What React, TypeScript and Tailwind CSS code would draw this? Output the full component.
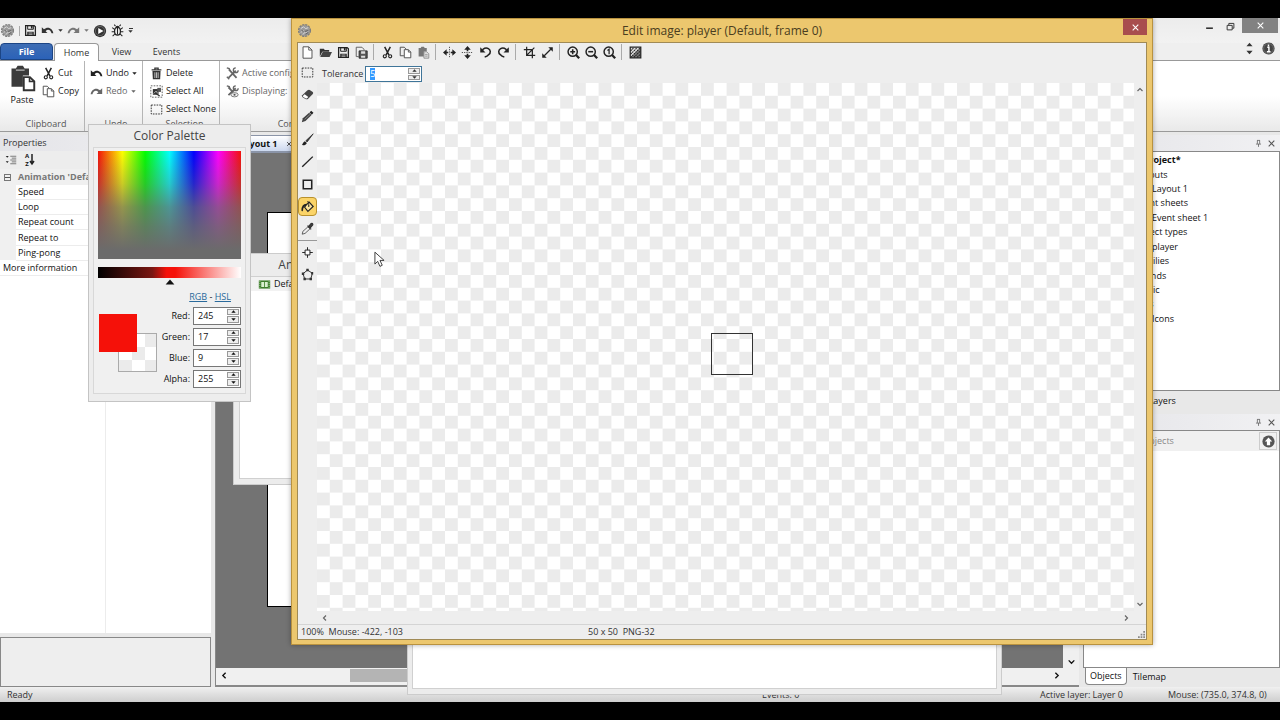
import React, { useEffect, useRef } from "react";

type IconProps = { name: string; className?: string };

const icons: Record<string, React.ReactNode> = {
  gear: (
    <>
      <circle cx="8" cy="8" r="6" fill="#9a9a9a" />
      <circle cx="8" cy="8" r="6.3" fill="none" stroke="#7d7d7d" strokeWidth="1.4" strokeDasharray="2.4 .9" />
      <path d="M4 6l3-2 2 2 3-1M4 10l3-2 2 3 3-2M6 12l2-1" stroke="#dcdcdc" strokeWidth="1" fill="none" />
      <path d="M8 9l4-1M9 12l3-2M5 8l2 1" stroke="#666" strokeWidth="1.2" />
    </>
  ),
  save: (
    <>
      <path d="M2 2h10.5L14 3.5V14H2z" fill="none" stroke="#222" strokeWidth="1.6" />
      <path d="M4.5 2h7v4.5h-7z" fill="none" stroke="#222" strokeWidth="1.2" />
      <path d="M8.5 2.5h2v3h-2zM4 9.5h8V14H4z" fill="#222" />
      <path d="M5.5 11h5M5.5 12.7h5" stroke="#eee" strokeWidth=".8" />
    </>
  ),
  undo: <path d="M1 4v7h7L5.7 8.8C8 6.3 11.5 6.5 13 11.5h2.2C14.5 5.5 8.5 2.2 3.600 6.600z" fill="currentColor" />,
  redo: <path d="M15 4v7H8l2.3-2.2C8 6.3 4.5 6.5 3 11.5H.8C1.5 5.5 7.5 2.2 12.4 6.6z" fill="currentColor" />,
  play: (
    <>
      <circle cx="8" cy="8" r="7" fill="#333" />
      <circle cx="8" cy="8" r="5.3" fill="none" stroke="#777" strokeWidth=".8" />
      <path d="M6 4.5l6 3.5-6 3.5z" fill="#fff" />
    </>
  ),
  bug: (
    <>
      <ellipse cx="8" cy="9" rx="3.6" ry="4.8" fill="none" stroke="#222" strokeWidth="1.5" />
      <path d="M5.5 4.5a2.500 2.500 0 015 0z" fill="#222" />
      <path d="M8 5v8M5.500 2.500L4 .8M10.500 2.500L12 .8M4.800 7L1.500 4.500M11.200 7l3.300-2.500M4.500 9.500H.8M11.500 9.500h3.700M5 12l-3 3M11 12l3 3" stroke="#222" strokeWidth="1.300" />
    </>
  ),
  paste: (
    <>
      <path d="M2 2.5h2.5L5.5 1h3l1 1.500H12v4H8.500V13H2z" fill="#3b3b3b" />
      <path d="M4.5 3.5h5" stroke="#bbb" strokeWidth=".7" />
      <path d="M9 7.500h3.500L15 10v5H9z" fill="#fff" stroke="#333" strokeWidth="1.100" />
      <path d="M12.300 7.500V10H15" fill="none" stroke="#333" strokeWidth=".9" />
    </>
  ),
  pasteDim: (
    <>
      <path d="M2 2.500h2.500L5.500 1h3l1 1.500H12v4H8.500V13H2z" fill="#777" />
      <path d="M8.500 7h3.500L14.500 9.500v5.500h-6z" fill="#ddd" stroke="#888" />
      <path d="M10 10.500h3M10 12.500h3" stroke="#999" />
    </>
  ),
  cut: (
    <>
      <path d="M4.500 1l5.200 10M11.500 1L6.300 11" stroke="#222" strokeWidth="1.800" fill="none" />
      <circle cx="4.700" cy="12.700" r="1.900" fill="none" stroke="#222" strokeWidth="1.400" />
      <circle cx="11.300" cy="12.700" r="1.900" fill="none" stroke="#222" strokeWidth="1.400" />
    </>
  ),
  copy: (
    <>
      <path d="M6 12H1.500V1.500h5L9 4" fill="none" stroke="#444" strokeWidth="1.100" />
      <path d="M6.500 4.500h5l3 3v7h-8z" fill="#fff" stroke="#444" strokeWidth="1.100" />
      <path d="M11.500 4.500v3h3" fill="none" stroke="#444" />
    </>
  ),
  trash: (
    <>
      <path d="M2 3.500h12M6 3V1.500h4V3" stroke="#333" strokeWidth="1.500" fill="none" />
      <path d="M3 5h10l-.5 10h-9z" fill="#333" />
      <path d="M6 6.500v7M8 6.500v7M10 6.500v7" stroke="#eee" strokeWidth=".9" />
    </>
  ),
  selectAll: (
    <>
      <path d="M1 1h14v14H1z" fill="none" stroke="#444" strokeDasharray="2 1.500" />
      <path d="M3.500 5h7v7h-7z" fill="#333" />
      <path d="M4.500 10.500l3-3 2 3" stroke="#ccc" fill="none" />
      <path d="M9 3.500h4.500v5H9z" fill="#555" />
      <path d="M8 11l4 2.500" stroke="#333" strokeWidth="1.500" />
    </>
  ),
  marquee: <path d="M1.500 2.500h13v11h-13z" fill="none" stroke="#333" strokeWidth="1.200" strokeDasharray="2 1.300" />,
  tools: (
    <>
      <path d="M3 13.500L12 4.500M3.500 3l9.500 10.500" stroke="#666" strokeWidth="2.200" fill="none" />
      <path d="M15 4a3 3 0 11-3-3M1 1l3 1 1 2.500M1 12l3 3" stroke="#666" strokeWidth="1.600" fill="none" />
    </>
  ),
  display: (
    <>
      <path d="M3 12.500L12 4M3 3l6 6" stroke="#666" strokeWidth="2.200" fill="none" />
      <path d="M15 4a3 3 0 11-3-3M1 1l3 1 1 2.500" stroke="#666" strokeWidth="1.600" fill="none" />
      <ellipse cx="10.500" cy="12" rx="4.500" ry="2.600" fill="#eee" stroke="#666" />
      <circle cx="10.500" cy="12" r="1.300" fill="#555" />
    </>
  ),
  newFile: (
    <>
      <path d="M2.500 1h7l4 4v10h-11z" fill="#fff" stroke="#444" strokeWidth="1.100" />
      <path d="M9.500 1v4h4" fill="none" stroke="#444" />
    </>
  ),
  open: (
    <>
      <path d="M1 13V3.500h5l1 1.500h5.500v2H4z" fill="#333" />
      <path d="M4.500 7.500H16L13 13.500H1.500z" fill="#444" />
    </>
  ),
  saveAs: (
    <>
      <path d="M1.500 13V1.500h7l2.500 2.500v1" fill="none" stroke="#555" strokeWidth="1.100" />
      <path d="M1.500 13h3" stroke="#555" />
      <path d="M5 6h10v9H5z" fill="#555" stroke="#222" />
      <path d="M7.500 6.500h5v3h-5zM7.500 12h5v2.500h-5z" fill="#ddd" />
    </>
  ),
  flipH: (
    <>
      <path d="M8 1v14" stroke="#333" strokeDasharray="1.500 1.300" />
      <path d="M0 8l4.500-4v8zM16 8l-4.500-4v8z" fill="#222" />
      <path d="M3 8h3.500M9.500 8H13" stroke="#222" strokeWidth="2" />
    </>
  ),
  flipV: (
    <>
      <path d="M1 8h14" stroke="#333" strokeDasharray="1.500 1.300" />
      <path d="M8 0l4 4.500H4zM8 16l4-4.500H4z" fill="#222" />
      <path d="M8 3v3.500M8 9.500V13" stroke="#222" strokeWidth="2" />
    </>
  ),
  rotL: (
    <>
      <path d="M4 6a5 4.500 0 118 4.500c-1 1.300-2.500 2.500-5 3" fill="none" stroke="#222" strokeWidth="1.900" />
      <path d="M1.500 1.500v6.500H8z" fill="#222" />
    </>
  ),
  rotR: (
    <>
      <path d="M12 6a5 4.500 0 10-8 4.500c1 1.300 2.500 2.500 5 3" fill="none" stroke="#222" strokeWidth="1.900" />
      <path d="M14.500 1.500v6.500H8z" fill="#222" />
    </>
  ),
  crop: <path d="M4.500 1v10.500H15M1 4.500h10.500V15M5 11l9-9" fill="none" stroke="#222" strokeWidth="1.500" />,
  resize: (
    <>
      <path d="M4 12l8-8" stroke="#222" strokeWidth="1.500" />
      <path d="M14.500 1.500v5.500L9 1.500zM1.500 14.500V9L7 14.500z" fill="#222" />
    </>
  ),
  zoomIn: (
    <>
      <circle cx="7" cy="7" r="5.700" fill="#eee" stroke="#222" strokeWidth="1.800" />
      <path d="M10.800 10.800L15 15" stroke="#222" strokeWidth="2.800" />
      <path d="M4 7h6M7 4v6" stroke="#222" strokeWidth="1.900" />
    </>
  ),
  zoomOut: (
    <>
      <circle cx="7" cy="7" r="5.700" fill="#eee" stroke="#222" strokeWidth="1.800" />
      <path d="M10.800 10.800L15 15" stroke="#222" strokeWidth="2.800" />
      <path d="M4 7h6" stroke="#222" strokeWidth="1.900" />
    </>
  ),
  zoomOne: (
    <>
      <circle cx="7" cy="7" r="5.700" fill="#eee" stroke="#222" strokeWidth="1.800" />
      <path d="M10.800 10.800L15 15" stroke="#222" strokeWidth="2.800" />
      <path d="M5.500 5.500L7.500 4v6" stroke="#222" strokeWidth="1.500" fill="none" />
    </>
  ),
  backdrop: (
    <>
      <path d="M1.500 1.500h13v13h-13z" fill="#e4e4e4" />
      <path d="M14.500 1.500v13h-13z" fill="#777" />
      <path d="M2 6l4-4M2 10l8-8M2 14L14 2M6 14l8-8M10 14l4-4" stroke="#222" strokeWidth="1.300" strokeDasharray="2 .8" />
      <path d="M1.500 1.500h13v13h-13z" fill="none" stroke="#222" strokeWidth="1.500" />
    </>
  ),
  eraser: (
    <>
      <path d="M1.500 9L8 2.800q1.300-1 2.800-.4L14.500 5q1 1 0 2.500L8.500 13.500q-1.500.8-3 0L2 11.500Q.8 10.300 1.500 9z" fill="#444" />
      <path d="M2.300 9.700l2.200-1.900 4.500 3.200-1.500 1.700q-1 .6-2 0l-2.700-1.500z" fill="#fff" />
    </>
  ),
  pencil: (
    <>
      <path d="M1 15l1.300-5L10 3.300 13 6 5.500 13.500z" fill="#444" />
      <path d="M10.500 3L12.500 1l2.800 2.500-2 2.300z" fill="#222" />
      <path d="M4.500 11.500L11 5.500" stroke="#aaa" strokeWidth=".8" />
    </>
  ),
  brush: (
    <>
      <path d="M.5 14.800c2-.5 1.500-3.800 4.300-4.800l2.400 2.200c-1 2.800-3.700 3.100-6.700 2.600z" fill="#222" />
      <path d="M6 9.500L15 1 7.500 11z" fill="#333" stroke="#333" />
    </>
  ),
  line: <path d="M1.500 14.500L14.500 2" stroke="#222" strokeWidth="1.700" />,
  rect: <path d="M2.800 2.800h10.400v10.400H2.800z" fill="none" stroke="#222" strokeWidth="1.900" />,
  bucket: (
    <>
      <path d="M6 6.500l4-4 5 5.500-6.500 6L4.500 9z" fill="#fce49b" stroke="#222" strokeWidth="1.400" />
      <path d="M9.500 7V2.500q-.8-1.500-2 0" fill="none" stroke="#222" />
      <circle cx="9.500" cy="7.500" r="1" fill="#222" />
      <path d="M7.500 4.500Q.5 4 .5 13q.8 2 2 0Q2.500 8.500 6 7.500z" fill="#222" />
    </>
  ),
  picker: (
    <>
      <path d="M1.500 15l.8-3.500L8.500 6 11 8.500 5 14z" fill="#eee" stroke="#444" />
      <path d="M8 4.500l4.500 4.500M9.500 5.500l3-3.500q2-.8 2 1.500l-3 3.500z" stroke="#333" strokeWidth="1.500" fill="#444" />
    </>
  ),
  origin: (
    <>
      <path d="M5 5h6v6H5z" fill="#fff" stroke="#222" strokeWidth="1.200" />
      <path d="M8 1.500V5M8 11v3.500M1.500 8H5M11 8h3.500" stroke="#222" strokeWidth="1.200" />
    </>
  ),
  polygon: (
    <>
      <path d="M8 2.500L14 6.500 12 13.500H4.500L2.500 7z" fill="none" stroke="#333" strokeWidth="1.200" />
      <path d="M6.500 1h3v3h-3zM12.500 5h2.500v3h-2.500zM10.500 12h3v3h-3zM3 12h3v3H3zM1 5.500h3v3H1z" fill="#333" />
    </>
  ),
  pin: <path d="M5.500 2.500h5M6 2.500v6M10 2.500v6M3.500 9h9M8 9v5" stroke="#555" strokeWidth="1.300" fill="none" />,
  close: <path d="M3 3l10 10M13 3L3 13" stroke="currentColor" strokeWidth="1.900" fill="none" />,
  film: (
    <>
      <path d="M1 3h14v10H1z" fill="#3d7d2b" />
      <path d="M4 5h3.500v6H4zM8.500 5H12v6H8.500z" fill="#d9efd0" />
      <path d="M2.300 4v8M13.700 4v8" stroke="#cfe8c5" strokeDasharray="1.200 1.200" />
    </>
  ),
  categories: (
    <>
      <path d="M1 2.500h4L3 5zM1 9.500h4L3 12z" fill="#222" />
      <path d="M7 3h8M9 5.500h6M7 8h8M9 10.500h6M7 13h8" stroke="#555" />
    </>
  ),
  up: <path d="M3 10l5-5 5 5" fill="none" stroke="currentColor" strokeWidth="2.400" />,
  down: <path d="M3 6l5 5 5-5" fill="none" stroke="currentColor" strokeWidth="2.400" />,
  left: <path d="M10 3L5 8l5 5" fill="none" stroke="currentColor" strokeWidth="2.400" />,
  right: <path d="M6 3l5 5-5 5" fill="none" stroke="currentColor" strokeWidth="2.400" />,
  caret: <path d="M1 4h14L8 12z" fill="currentColor" />,
  caretUp: <path d="M1 12h14L8 4z" fill="currentColor" />,
  upCircle: (
    <>
      <circle cx="8" cy="8" r="7.500" fill="#555" />
      <path d="M8 3l4.500 5H10v4.500H6V8H3.500z" fill="#fff" />
    </>
  ),
  info: (
    <>
      <circle cx="8" cy="8" r="7.500" fill="#444" />
      <circle cx="8" cy="8" r="6" fill="none" stroke="#888" strokeWidth=".7" />
      <path d="M8 3v2.200M6.500 6.500h2V12M6 12h4.500" stroke="#fff" strokeWidth="1.800" fill="none" />
    </>
  ),
  minimize: <path d="M2 11h12" stroke="#222" strokeWidth="2.600" />,
  restore: <path d="M2 6h9v8H2zM5 5.500V2.500h9v8.500h-2.500" fill="none" stroke="#333" strokeWidth="1.700" />,
};

const Icon = ({ name, className = "size-3" }: IconProps) => (
  <svg viewBox="0 0 16 16" className={`shrink-0 ${className}`} aria-hidden="true">
    {icons[name]}
  </svg>
);

const Ribbon = () => (
  <div className="flex h-[71px] shrink-0 overflow-hidden border-b border-[#9a9a9a] bg-linear-to-b from-white from-50% to-[#e9e9e9]">
    <RibbonGroup label="Clipboard" width="w-[85px] pl-2">
      <button className="flex w-7 flex-col items-center">
        <Icon name="paste" className="size-7" />
        <span className="leading-4">Paste</span>
      </button>
      <div className="ml-[6px]">
        <RibbonButton icon="cut" label="Cut" />
        <RibbonButton icon="copy" label="Copy" />
      </div>
    </RibbonGroup>
    <RibbonGroup label="Undo" width="w-[58px] pl-[5px]">
      <div>
        <RibbonButton icon="undo" label="Undo" caret />
        <RibbonButton icon="redo" label="Redo" caret dim />
      </div>
    </RibbonGroup>
    <RibbonGroup label="Selection" width="w-[77px] pl-[7px]">
      <div>
        <RibbonButton icon="trash" label="Delete" />
        <RibbonButton icon="selectAll" label="Select All" />
        <RibbonButton icon="marquee" label="Select None" />
      </div>
    </RibbonGroup>
    <RibbonGroup label="Configurations" width="w-[172px] pl-[6px]">
      <div className="w-20 overflow-hidden">
        <RibbonButton icon="tools" label="Active configuration:" dim />
        <RibbonButton icon="display" label="Displaying:" dim />
      </div>
    </RibbonGroup>
  </div>
);

const RibbonGroup = ({ label, width, children }: { label: string; width: string; children: React.ReactNode }) => (
  <div className={`flex shrink-0 flex-col border-r border-[#b5b5b5] pt-[3px] ${width}`}>
    <div className="flex h-[54px]">{children}</div>
    <div className="text-center leading-3 text-[#555]">{label}</div>
  </div>
);

const RibbonButton = ({ icon, label, caret, dim }: { icon: string; label: string; caret?: boolean; dim?: boolean }) => (
  <button className={`flex h-[18px] items-center gap-[3px] whitespace-nowrap ${dim ? "text-[#666]" : "text-[#222]"}`}>
    <Icon name={icon} className="size-[13px]" />
    {label}
    {caret && <Icon name="caret" className="size-[5px]" />}
  </button>
);

const PaneHeader = ({ title = "" }: { title?: string }) => (
  <div className="flex h-4 shrink-0 items-center justify-between bg-linear-to-r from-[#e4e4e8] to-[#f1f1f3] pl-[3px] pr-1 text-[#333]">
    <span>{title}</span>
    <span className="flex gap-1 text-[#555]">
      <button aria-label="Pin"><Icon name="pin" className="size-[9px]" /></button>
      <button aria-label="Close pane"><Icon name="close" className="size-[9px]" /></button>
    </span>
  </div>
);

const properties = ["Speed", "Loop", "Repeat count", "Repeat to", "Ping-pong"];

const PropertiesPane = () => (
  <section className="flex w-[211px] shrink-0 flex-col">
    <PaneHeader title="Properties" />
    <div className="flex h-[18px] shrink-0 items-center gap-2 bg-[#ededed] pl-[5px]">
      <button aria-label="Categorized"><Icon name="categories" /></button>
      <button aria-label="Sort" className="flex items-center">
        <span className="flex flex-col text-[6px] leading-[8px] font-bold">
          <span>A</span>
          <span>Z</span>
        </span>
        <svg viewBox="0 0 6 12" className="h-3 w-[6px]"><path d="M3 0v10M1 7l2 3 2-3" fill="none" stroke="#222" strokeWidth="1.500" /></svg>
      </button>
    </div>
    <div className="flex grow flex-col bg-white">
      <table className="h-[107px] w-full table-fixed border-collapse text-left">
        <tbody>
          <tr className="h-4 bg-[#f0f0f0]">
            <th className="w-4 p-0"><span className="ml-1 flex size-[7px] items-center border border-[#777]"><span className="h-px w-full bg-[#555]" /></span></th>
            <th colSpan={2} className="p-0 pl-[2px] font-bold text-[#777]">Animation 'Default'</th>
          </tr>
          {properties.map((p) => (
            <tr key={p}>
              <td className="bg-[#f0f0f0] p-0" />
              <th className="w-[89px] border-b border-r border-[#ececec] p-0 pl-[2px] font-normal">{p}</th>
              <td className="border-b border-[#ececec] p-0" />
            </tr>
          ))}
          <tr>
            <th colSpan={2} className="border-r border-b border-[#ececec] p-0 pl-[3px] font-normal">More information</th>
            <td className="border-b border-[#ececec] p-0" />
          </tr>
        </tbody>
      </table>
      <div className="w-[106px] grow border-r border-[#ececec]" />
    </div>
    <div className="mt-1 h-[50px] shrink-0 border border-[#888] bg-[#eee]" />
  </section>
);

const LayoutView = () => (
  <section className="ml-1 flex min-w-0 grow flex-col border-l border-[#888] bg-[#f0f0f0]">
    <div className="flex h-[18px] shrink-0 items-end border-b border-[#8a94a8] bg-[#e2e2e6] pl-[18px]">
      <button className="flex h-[17px] items-center gap-2 rounded-t border border-[#8a94a8] bg-linear-to-b from-white to-[#ccd8ef] px-1 font-bold whitespace-nowrap">
        Layout 1 <Icon name="close" className="size-[6px]" />
      </button>
    </div>
    <div className="flex min-h-0 grow">
      <div className="grow bg-[#737373] pt-[59px] pl-[51px]">
        <div className="h-[395px] w-[680px] border border-black bg-white" />
      </div>
      <div className="flex w-4 flex-col items-center justify-end pb-[2px]"><Icon name="down" className="size-[9px]" /></div>
    </div>
    <div className="flex h-[14px] shrink-0 items-center pl-1">
      <Icon name="left" className="size-[9px]" />
      <div className="ml-[121px] h-[13px] w-[480px] bg-[#b4b4b4]" />
      <Icon name="right" className="mr-[18px] ml-auto size-[9px]" />
    </div>
    <div className="h-[5px] shrink-0 border-b-2 border-[#888]" />
  </section>
);

const tree = [
  { label: "New project*", indent: "pl-[37px] font-bold" },
  { label: "Layouts", indent: "pl-[51px]" },
  { label: "Layout 1", indent: "pl-[68px]" },
  { label: "Event sheets", indent: "pl-[51px]" },
  { label: "Event sheet 1", indent: "pl-[68px]" },
  { label: "Object types", indent: "pl-[51px]" },
  { label: "player", indent: "pl-[68px]" },
  { label: "Families", indent: "pl-[51px]" },
  { label: "Sounds", indent: "pl-[51px]" },
  { label: "Music", indent: "pl-[51px]" },
  { label: "Files", indent: "pl-[51px]" },
  { label: "Icons", indent: "pl-[68px]" },
];

const ProjectPane = () => (
  <section className="ml-1 flex w-[197px] shrink-0 flex-col">
    <PaneHeader />
    <div className="grow border border-[#888] bg-white pt-px">
      <ul className="grid h-[173px] auto-rows-fr">
        {tree.map((t) => (
          <li key={t.label} className={`flex items-center ${t.indent}`}>{t.label}</li>
        ))}
      </ul>
    </div>
    <div className="flex h-[23px] shrink-0 items-start gap-5 pt-1 pl-3">
      <button>Projects</button>
      <button>Layers</button>
    </div>
    <PaneHeader />
    <div className="flex h-[238px] shrink-0 flex-col border border-[#888] bg-white">
      <div className="flex h-5 shrink-0 items-center bg-[#f0f0f0] pr-[2px]">
        <input aria-label="Search objects" placeholder="Search objects" className="w-full min-w-0 grow pl-[29px] placeholder:text-[#888]" />
        <button aria-label="Up" className="flex size-[18px] shrink-0 items-center justify-center border border-[#ccc]"><Icon name="upCircle" className="size-[13px]" /></button>
      </div>
    </div>
    <div className="flex h-[19px] shrink-0 items-start pl-[2px]">
      <button className="h-[17px] rounded-b-sm border border-t-0 border-[#888] bg-white px-1">Objects</button>
      <button className="h-[17px] px-[6px]">Tilemap</button>
    </div>
  </section>
);

const MainWindow = () => (
  <div className="flex grow flex-col bg-[#e8e8e8]">
    <header className="flex h-[25px] shrink-0 items-center justify-between bg-linear-to-b from-[#ececec] to-[#f2f2f2]">
      <div className="flex h-full items-center gap-1 text-[#333]">
        <Icon name="gear" className="size-[15px]" />
        <span className="h-[10px] w-px bg-[#aaa]" />
        <button aria-label="Save"><Icon name="save" className="size-[13px]" /></button>
        <button aria-label="Undo" className="flex items-center gap-1"><Icon name="undo" className="size-[13px]" /><Icon name="caret" className="size-[5px]" /></button>
        <button aria-label="Redo" className="flex items-center gap-1 text-[#777]"><Icon name="redo" className="size-[13px]" /><Icon name="caret" className="size-[5px]" /></button>
        <button aria-label="Run"><Icon name="play" className="size-[14px]" /></button>
        <button aria-label="Debug"><Icon name="bug" className="size-[13px]" /></button>
        <button aria-label="More" className="flex flex-col items-center"><span className="h-px w-1 bg-[#333]" /><Icon name="caret" className="size-[5px]" /></button>
      </div>
      <div className="flex h-full items-start pr-[2px]">
        <button aria-label="Minimize" className="mr-3 h-4"><Icon name="minimize" className="size-[9px]" /></button>
        <button aria-label="Restore" className="mr-[7px] h-4"><Icon name="restore" className="size-[9px]" /></button>
        <button aria-label="Close" className="flex h-[15px] w-9 items-center justify-center bg-[#828282] text-white"><Icon name="close" className="size-[9px]" /></button>
      </div>
    </header>
    <nav className="flex h-[18px] shrink-0 items-end border-b border-[#999] bg-[#efefef] text-[#333]">
      <button className="h-[17px] w-[53px] rounded-t-sm border border-[#1c4585] bg-linear-to-b from-[#3e6db4] to-[#2b62b8] font-bold text-white">File</button>
      <button className="-mb-px ml-px h-[18px] w-[45px] rounded-t-sm border border-b-0 border-[#999] bg-white">Home</button>
      <button className="h-[17px] w-[45px]">View</button>
      <button className="h-[17px] w-[45px]">Events</button>
      <div className="mr-[5px] mb-1 ml-auto flex items-center gap-[9px]">
        <span className="flex flex-col gap-px"><Icon name="caretUp" className="size-[7px]" /><Icon name="caret" className="size-[7px]" /></span>
        <button aria-label="About"><Icon name="info" className="size-[13px]" /></button>
      </div>
    </nav>
    <Ribbon />
    <main className="flex min-h-0 grow pt-[3px]">
      <PropertiesPane />
      <LayoutView />
      <ProjectPane />
    </main>
    <footer className="grid h-[15px] shrink-0 grid-cols-[1fr_278px_128px_112px] items-center bg-linear-to-b from-[#f0f0f0] to-[#cecece] text-[#333]">
      <span className="pl-[7px]">Ready</span>
      <span>Events: 0</span>
      <span>Active layer: Layer 0</span>
      <span>Mouse: (735.0, 374.8, 0)</span>
    </footer>
  </div>
);

const AnimationsWindow = () => (
  <section className="absolute top-[253px] left-[233px] flex h-[232px] w-[154px] flex-col border border-[#ccc] bg-[#ececec] px-[5px] pb-[5px]">
    <h2 className="h-[22px] text-center text-[12px] leading-[22px] text-[#444]">Animations</h2>
    <div className="grow border border-[#d0d0d0] bg-white">
      <div className="flex h-[14px] w-20 items-center gap-[3px] bg-[#f2f2f2] pl-[18px]">
        <Icon name="film" className="size-[13px]" />Default
      </div>
    </div>
  </section>
);

const channels = [
  { label: "Red", value: 245 },
  { label: "Green", value: 17 },
  { label: "Blue", value: 9 },
  { label: "Alpha", value: 255 },
];

const Spinner = ({ label }: { label: string }) => (
  <span className="flex w-[14px] shrink-0 flex-col gap-px p-px">
    <button aria-label={`Increase ${label}`} className="flex min-h-0 flex-1 items-center justify-center border border-[#999] bg-[#eee]"><Icon name="caretUp" className="size-[5px]" /></button>
    <button aria-label={`Decrease ${label}`} className="flex min-h-0 flex-1 items-center justify-center border border-[#999] bg-[#eee]"><Icon name="caret" className="size-[5px]" /></button>
  </span>
);

const Checker = ({ id, cell, className }: { id: string; cell: number; className: string }) => (
  <svg className={className} aria-hidden="true">
    <defs>
      <pattern id={id} width={cell * 2} height={cell * 2} patternUnits="userSpaceOnUse">
        <rect width={cell * 2} height={cell * 2} fill="#fff" />
        <rect width={cell} height={cell} fill="#ebebeb" />
        <rect x={cell} y={cell} width={cell} height={cell} fill="#ebebeb" />
      </pattern>
    </defs>
    <rect width="100%" height="100%" fill={`url(#${id})`} />
  </svg>
);

const ColorPalette = () => (
  <section className="absolute top-[124px] left-[88px] h-[278px] w-[163px] border border-[#c4c4c4] bg-[#ededed] px-1 pb-1">
    <h2 className="h-[22px] text-center text-[12px] leading-[22px] text-[#444]">Color Palette</h2>
    <div className="h-[247px] border border-[#d8d8d8] bg-[#f0f0f0] px-1 pt-[3px]">
      <div className="h-[108px] bg-[linear-gradient(to_right,#f51109,yellow_17%,lime_33%,cyan_50%,blue_67%,magenta_84%,#f51109)]">
        <div className="h-full bg-[linear-gradient(to_bottom,#6b6b6b00,#6b6b6b59_30%,#6b6b6bb8_52%,#6b6b6bdd_70%,#6b6b6b_92%)]" />
      </div>
      <div className="mt-2 h-[11px] bg-[linear-gradient(to_right,black,#7a1712_38%,#f51109_48%,#f51109_54%,white)]" />
      <Icon name="caretUp" className="mx-auto -mt-px size-[10px]" />
      <div className="mt-1 pr-[10px] text-right leading-3">
        <a href="#rgb" className="text-[#2a6a9c] underline">RGB</a> - <a href="#hsl" className="text-[#2a6a9c] underline">HSL</a>
      </div>
      <div className="mt-[3px] flex justify-between">
        <div className="relative mt-2 ml-px size-[58px]">
          <div className="absolute right-0 bottom-0 size-[39px] border border-[#aaa]">
            <Checker id="swatch" cell={13} className="size-full" />
          </div>
          <div className="absolute top-0 left-0 size-[38px] bg-[#f51109]" />
        </div>
        <div className="flex flex-col gap-[2px]">
          {channels.map((c) => (
            <label key={c.label} className="flex h-[19px] items-center justify-end gap-[3px]">
              {c.label}:
              <span className="flex h-[18px] w-12 border border-[#777] bg-white">
                <input defaultValue={c.value} className="w-8 min-w-0 grow pl-1 outline-none" />
                <Spinner label={c.label} />
              </span>
            </label>
          ))}
        </div>
      </div>
    </div>
  </section>
);

const toolbar = [
  ["newFile", "open", "save", "saveAs"],
  ["cut", "copy", "pasteDim"],
  ["flipH", "flipV", "rotL", "rotR"],
  ["crop", "resize"],
  ["zoomIn", "zoomOut", "zoomOne"],
  ["backdrop"],
];

const tools = ["marquee", "eraser", "pencil", "brush", "line", "rect", "bucket", "picker"];

const EditImageWindow = () => {
  const tolerance = useRef<HTMLInputElement>(null);

  useEffect(() => {
    tolerance.current?.focus();
    tolerance.current?.select();
  }, []);

  return (
    <section className="absolute top-[18px] right-[127px] bottom-[75px] left-[291px] flex flex-col border border-[#b9923f] bg-[#ecc76e] px-[5px] pb-1 shadow-[0_0_5px_#0005]">
      <header className="relative flex h-[23px] shrink-0 items-center justify-center text-[12px] text-[#4a3d20]">
        <Icon name="gear" className="absolute left-0 size-[15px]" />
        <h1>Edit image: player (Default, frame 0)</h1>
        <button aria-label="Close editor" className="absolute top-0 right-0 flex h-4 w-6 items-center justify-center bg-[#a84e4e] text-white"><Icon name="close" className="size-[9px]" /></button>
      </header>
      <div className="flex min-h-0 grow flex-col border border-[#a08a55] bg-[#eee]">
        <div className="flex h-[18px] shrink-0">
          {toolbar.map((group) => (
            <div key={group[0]} className="flex items-center after:mx-[3px] after:h-4 after:w-[2px] after:border-l after:border-[#aaa] last:after:hidden">
              {group.map((name) => (
                <button key={name} aria-label={name} className="flex h-[18px] w-[18px] items-center justify-center"><Icon name={name} className="size-[13px]" /></button>
              ))}
            </div>
          ))}
        </div>
        <div className="flex min-h-0 grow">
          <div className="w-[19px] shrink-0">
            <div className="grid h-[180px] auto-rows-fr border-b border-[#999]">
              {tools.map((name) => (
                <button
                  key={name}
                  aria-label={name}
                  className={`flex items-center justify-center ${name === "bucket" ? "my-[2px] rounded-sm border border-[#b8912e] bg-[#fbd468]" : ""}`}
                >
                  <Icon name={name} className="size-[13px]" />
                </button>
              ))}
            </div>
            <button aria-label="origin" className="flex h-[22px] w-full items-center justify-center"><Icon name="origin" className="size-[13px]" /></button>
            <button aria-label="polygon" className="flex h-[22px] w-full items-center justify-center"><Icon name="polygon" className="size-[13px]" /></button>
          </div>
          <div className="flex min-w-0 grow flex-col">
            <div className="flex h-[22px] shrink-0 items-end gap-[2px] pb-px pl-[5px] text-[#333]">
              <label htmlFor="tolerance" className="leading-4">Tolerance</label>
              <span className="flex h-4 w-[57px] border border-[#3f7599] bg-white">
                <input id="tolerance" ref={tolerance} defaultValue="5" className="w-10 min-w-0 grow pl-1 outline-none selection:bg-[#3399ff] selection:text-white" />
                <Spinner label="tolerance" />
              </span>
            </div>
            <div className="flex min-h-0 grow">
              <div className="relative min-w-0 grow">
                <Checker id="canvas" cell={12.8} className="absolute inset-0 size-full" />
                <div className="absolute top-[250px] left-[394px] size-[42px] border border-[#333]" />
                <svg viewBox="0 0 12 18" className="absolute top-[168px] left-[57px] h-[17px] w-[11px]">
                  <path d="M1 1v13l3-3 2.500 5.500 2.500-1.200L6.500 10H11z" fill="#fff" stroke="#333" />
                </svg>
              </div>
              <div className="flex w-3 shrink-0 flex-col items-center justify-between py-[3px] text-[#666]">
                <Icon name="up" className="size-2" />
                <Icon name="down" className="size-2" />
              </div>
            </div>
            <div className="flex h-[13px] shrink-0 items-center justify-between pr-4 pl-1 text-[#666]">
              <Icon name="left" className="size-2" />
              <Icon name="right" className="size-2" />
            </div>
          </div>
        </div>
        <footer className="flex h-[15px] shrink-0 items-center border-t border-[#d4d4d4] pl-[3px] text-[#333]">
          <span className="w-[287px] whitespace-pre">100%  Mouse: -422, -103</span>
          <span className="whitespace-pre">50 x 50  PNG-32</span>
          <svg viewBox="0 0 8 8" className="mt-1 mr-px ml-auto size-[7px]"><path d="M6 0h2v2H6zM6 3h2v2H6zM3 3h2v2H3zM0 6h2v2H0zM3 6h2v2H3zM6 6h2v2H6z" fill="#888" /></svg>
        </footer>
      </div>
    </section>
  );
};

export default function App() {
  return (
    <div className="relative flex h-screen flex-col overflow-hidden bg-black py-[18px] font-['Open_Sans',sans-serif] text-[9px] leading-3 text-[#111]">
      <MainWindow />
      <AnimationsWindow />
      <section className="absolute right-[278px] bottom-[25px] left-[407px] h-20 border border-[#ccc] bg-[#ececec] px-1 pb-[5px]">
        <div className="h-full border border-[#d0d0d0] bg-white" />
      </section>
      <EditImageWindow />
      <ColorPalette />
    </div>
  );
}
